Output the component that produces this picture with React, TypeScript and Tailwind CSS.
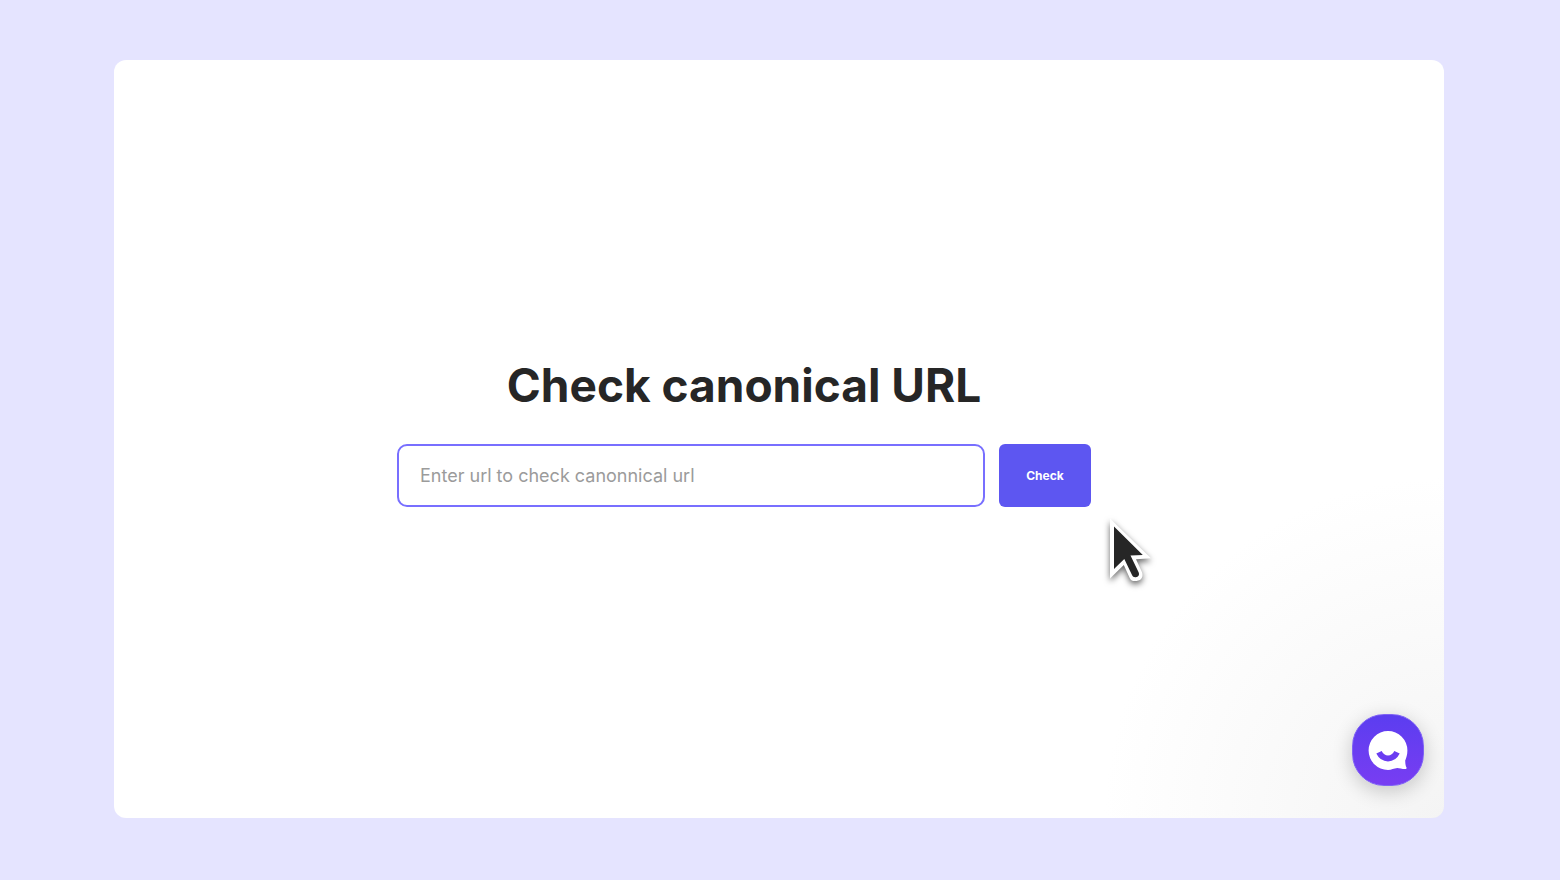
import { useState } from "react";

function PointerIcon() {
  return (
    <svg
      viewBox="0 0 60 84"
      aria-hidden="true"
      className="pointer-events-none absolute left-full top-full ml-[9px] mt-[3px] h-[84px] w-[60px] drop-shadow-[0_3px_3px_rgba(0,0,0,0.6)]"
    >
      <path
        d="M10 8.5 L51 48.3 L36 49.2 L41.8 61.8 C43.6 66 42 70.6 36.5 71 C33 71.3 31 70.8 29.7 68 L23.8 55 L10 68.5 Z"
        fill="#fff"
      />
      <path
        d="M14 16.5 L42.8 44.9 L30.5 45.4 L38.6 62.2 C39.8 65 38.2 67 35.8 67.2 C33.8 67.4 32.8 66.6 32 65 L24.3 49 L14 58.9 Z"
        fill="#262626"
      />
    </svg>
  );
}

function ChatButton() {
  return (
    <button
      type="button"
      aria-label="Open chat"
      className="absolute bottom-8 right-5 flex size-[72px] items-center justify-center rounded-[32px] border border-[#7f63f3] bg-linear-to-b from-[#5b3df0] to-[#783df2] shadow-[0_5px_20px_rgba(0,0,0,0.2)]"
    >
      <svg viewBox="0 0 40 40" className="size-10" aria-hidden="true">
        <path
          d="M20 1.1 A19.4 19.4 0 1 0 20 39.9 C23.3 39.9 26 38.2 29.2 37.9 C31.5 37.9 34.6 39.2 37.7 39 C38.6 38.9 38.8 38.1 38.4 37.3 C37.4 35.5 37.3 33 37.2 30.5 C38.3 28 39.4 24.5 39.4 20.5 A19.4 19.4 0 0 0 20 1.1 Z"
          fill="#fff"
        />
        <path
          d="M11 22.3 C15 30.5 25 30.5 29 22.3"
          fill="none"
          stroke="#6a3df1"
          strokeWidth="6"
        />
      </svg>
    </button>
  );
}

export default function App() {
  const [url, setUrl] = useState("");

  return (
    <div className="flex min-h-screen bg-[#e5e4ff] pb-[62px] pl-[114px] pr-[116px] pt-[60px] font-['Inter',sans-serif]">
      <main className="relative flex flex-1 flex-col items-center justify-center rounded-xl bg-white bg-[radial-gradient(circle_340px_at_bottom_right,#f4f4f4_0%,#fff_100%)] pb-3.5 pr-[70px]">
        <h1 className="text-[46px]/14 font-bold text-[#262626]">Check canonical URL</h1>
        <form
          onSubmit={(e) => e.preventDefault()}
          className="relative mt-[31px] flex w-full max-w-[694px] gap-3.5"
        >
          <input
            type="text"
            aria-label="URL"
            value={url}
            onChange={(e) => setUrl(e.target.value)}
            placeholder="Enter url to check canonnical url"
            className="h-[63px] min-w-0 flex-1 rounded-[10px] border-2 border-[#786fff] bg-white px-[21px] text-lg text-[#262626] outline-none placeholder:text-[#9b9b9b]"
          />
          <button
            type="submit"
            className="h-[63px] w-[92px] rounded-md bg-[#5d56f1] text-xs font-bold text-white"
          >
            Check
          </button>
          <PointerIcon />
        </form>
        <ChatButton />
      </main>
    </div>
  );
}
